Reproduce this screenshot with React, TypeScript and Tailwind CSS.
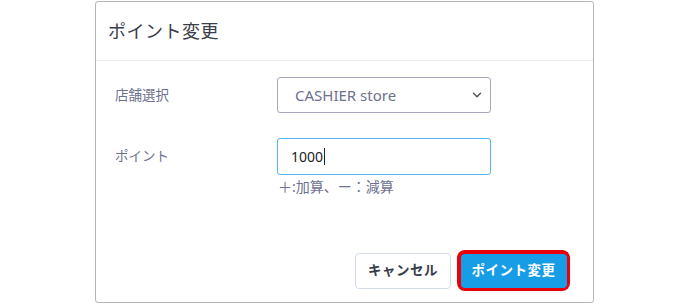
import React from 'react';
import { ChevronDown } from 'lucide-react';

const App: React.FC = () => {
  return (
    <div className="w-[688px] h-[304px] bg-white pt-px" style={{ fontFamily: '"Noto Sans", "Noto Sans CJK JP", sans-serif' }}>
      <div className="ml-[95px] w-[499px] h-[302px] border border-[#b5b5b5] rounded-[3px] flex flex-col">
        {/* Header */}
        <div className="h-[59px] border-b border-[#e6e9ef] flex items-center pl-[12px]">
          <h2 className="text-[18px] text-[#3a3d4a] tracking-[0.5px]">ポイント変更</h2>
        </div>

        {/* Body */}
        <div className="flex-1 pl-[19px] pr-[102px] pt-[16px]">
          <div className="flex items-center">
            <label className="w-[162px] text-[13.5px] text-[#6d7190]">店舗選択</label>
            <div className="flex-1 h-[36px] border border-[#a6a9bb] rounded-[3px] flex items-center justify-between pl-[17px] pr-[6px]">
              <span className="text-[15px] text-[#6d7190]">CASHIER store</span>
              <ChevronDown size={14} strokeWidth={2.5} className="text-[#555]" />
            </div>
          </div>

          <div className="flex items-start mt-[25px]">
            <label className="w-[162px] text-[13.5px] text-[#6d7190] pt-[8px]">ポイント</label>
            <div className="flex-1">
              <div className="h-[37px] border border-[#5ab4f0] rounded-[3px] flex items-center pl-[13px]">
                <span className="text-[14px] text-[#222]">1000</span>
                <span className="w-px h-[17px] bg-[#222] ml-px"></span>
              </div>
              <p className="text-[14px] text-[#6d7190] mt-[1px] pl-[1px]">＋:加算、ー：減算</p>
            </div>
          </div>
        </div>

        {/* Footer */}
        <div className="flex justify-end items-center gap-[6px] pr-[23px] pb-[11px]">
          <button className="w-[96px] h-[36px] border border-[#d3dbe8] rounded-[4px] text-[13.5px] font-bold text-[#3a3d4a] tracking-[0.5px]">
            キャンセル
          </button>
          <div className="p-[3.5px] rounded-[8px] bg-[#e8000b]">
            <button className="w-[106px] h-[34px] rounded-[4px] bg-[#179ce6] text-white text-[13.5px] font-bold tracking-[0.5px]">
              ポイント変更
            </button>
          </div>
        </div>
      </div>
    </div>
  );
};

export default App;
